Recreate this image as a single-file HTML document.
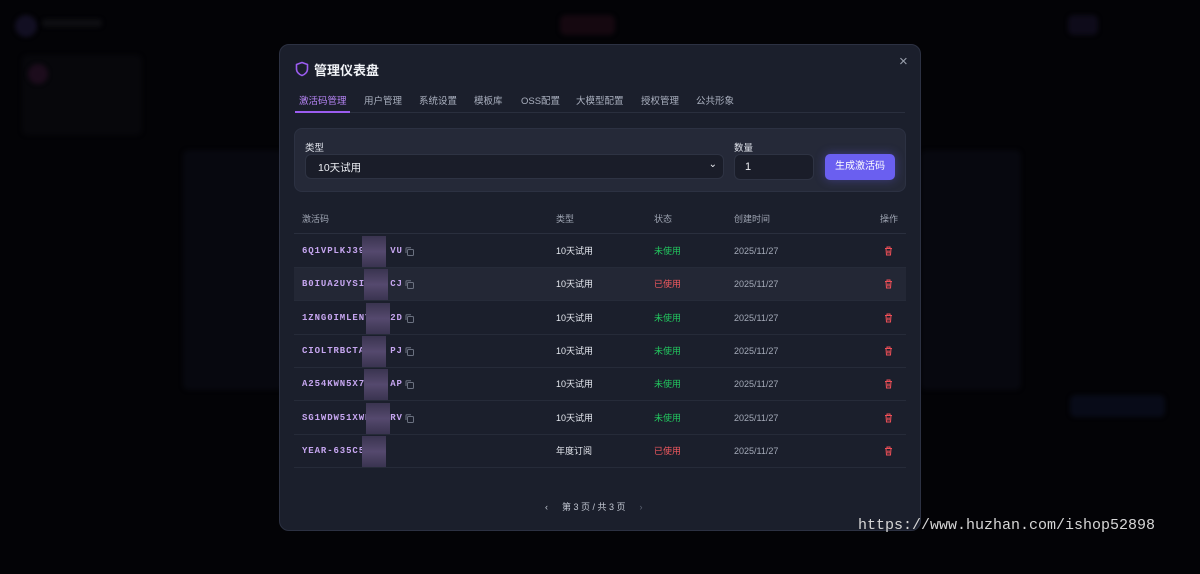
<!DOCTYPE html>
<html><head><meta charset="utf-8"><style>
*{box-sizing:border-box;margin:0;padding:0}
body{width:1200px;height:574px;background:#030306;position:relative;overflow:hidden;font-family:"Liberation Sans","Noto Sans CJK SC",sans-serif;}
.b{position:absolute;border-radius:6px;filter:blur(2px)}
.modal{position:absolute;left:279px;top:44px;width:642px;height:487px;background:#1b1f2c;border:1px solid #2c3142;border-radius:10px}
.t{position:absolute;white-space:nowrap}
.tabs{position:absolute;left:15px;top:42px;width:610px;height:26px;border-bottom:1px solid #2a2f3e}
.tabs span{position:absolute;top:6px;font-size:9.5px;color:#aab0bf}
.panel{position:absolute;left:14px;top:83px;width:612px;height:64px;background:#252938;border-radius:8px;border:1px solid #2c3142}
.row{position:absolute;left:14px;width:612px;height:33px;border-bottom:1px solid #262b39;font-size:9px}
.row span{position:absolute;top:0;line-height:32px}
.code{left:8px;color:#c6a6f0;font-family:"Liberation Mono",monospace;letter-spacing:0.9px;font-weight:bold}
.ty{left:262px;color:#e4e7ee}
.g{left:360px;color:#22c55e}
.r{left:360px;color:#f0595f}
.d{left:440px;color:#a3a9b7}
.mosaic{position:absolute;top:1px;width:24px;height:31px;background:linear-gradient(#3a3450,#55496e 50%,#3a3450)}
</style></head><body>
<div class="b" style="left:15px;top:15px;width:22px;height:22px;background:#120f22;border-radius:50%"></div>
<div class="b" style="left:42px;top:19px;width:60px;height:8px;background:#0e0e12"></div>
<div class="b" style="left:22px;top:55px;width:120px;height:80px;background:#07070b"></div>
<div class="b" style="left:28px;top:64px;width:20px;height:20px;background:#1c0c1c;border-radius:50%"></div>
<div class="b" style="left:560px;top:15px;width:55px;height:20px;background:#150810"></div>
<div class="b" style="left:1068px;top:15px;width:30px;height:20px;background:#0e0b1a"></div>
<div class="b" style="left:183px;top:150px;width:100px;height:240px;background:#07080f"></div>
<div class="b" style="left:921px;top:150px;width:100px;height:240px;background:#07080f"></div>
<div class="b" style="left:1070px;top:395px;width:95px;height:22px;background:#080b18"></div>

<div class="modal">
 <svg class="t" style="left:15px;top:16px" width="14" height="16" viewBox="0 0 14 16"><path d="M7 1.5 L12.5 3.5 V8 C12.5 11 10 13.5 7 14.5 C4 13.5 1.5 11 1.5 8 V3.5 Z" fill="none" stroke="#9b5cf0" stroke-width="1.6" stroke-linejoin="round"/></svg>
 <div class="t" style="left:34px;top:15px;font-size:13px;font-weight:bold;color:#f1f3f7">管理仪表盘</div>
 <div class="t" style="left:619px;top:8px;font-size:15px;color:#9aa0ad">×</div>
 <div class="tabs">
  <span style="left:4px;color:#b684f5">激活码管理</span>
  <span style="left:69px">用户管理</span><span style="left:124px">系统设置</span><span style="left:179px">模板库</span>
  <span style="left:226px">OSS配置</span><span style="left:281px">大模型配置</span><span style="left:346px">授权管理</span><span style="left:401px">公共形象</span>
  <div style="position:absolute;left:0;bottom:-1px;width:55px;height:2px;background:#9b5cf0"></div>
 </div>
 <div class="panel">
  <div class="t" style="left:10px;top:11px;font-size:9.5px;color:#dfe2ea">类型</div>
  <div class="t" style="left:10px;top:25px;width:419px;height:25px;background:#1a1d29;border:1px solid #2e3343;border-radius:6px;font-size:10.5px;color:#eceef3;padding:5px 12px">10天试用<span style="position:absolute;right:6px;top:4px;font-size:10px">⌄</span></div>
  <div class="t" style="left:439px;top:11px;font-size:9.5px;color:#dfe2ea">数量</div>
  <div class="t" style="left:439px;top:25px;width:80px;height:26px;background:#1a1d29;border:1px solid #2e3343;border-radius:6px;font-size:11px;color:#eceef3;padding:6px 10px">1</div>
  <div class="t" style="left:530px;top:25px;width:70px;height:26px;background:#6a5ff0;border-radius:5px;font-size:10px;color:#fff;text-align:center;line-height:26px;box-shadow:0 0 10px rgba(106,95,240,.4)">生成激活码</div>
 </div>
 <div class="row" style="top:159px;height:30px;border-bottom:1px solid #2a2f3e;font-size:9px;color:#9ea4b2">
  <span style="left:8px;line-height:30px">激活码</span><span style="left:262px;line-height:30px">类型</span><span style="left:360px;line-height:30px">状态</span><span style="left:440px;line-height:30px">创建时间</span><span style="left:586px;line-height:30px">操作</span>
 </div>
 <div id="rows"></div>
 <div class="t" style="left:265px;top:455px;font-size:9px;color:#c3c8d3"><span style="color:#c3c8d3;margin-right:14px">‹</span>第 3 页 / 共 3 页<span style="color:#5d6373;margin-left:14px">›</span></div>
</div>
<div class="t" style="left:858px;top:517px;font-family:'Liberation Mono',monospace;font-size:15px;color:#d6d6d6">https://www.huzhan.com/ishop52898</div>
<script>
var d=[["6Q1VPLKJ394","VU",1,"10天试用"],["B0IUA2UYSII","CJ",0,"10天试用"],["1ZNG0IMLENY","2D",1,"10天试用"],["CIOLTRBCTA8","PJ",1,"10天试用"],["A254KWN5X7H","AP",1,"10天试用"],["SG1WDW51XWN","RV",1,"10天试用"],["YEAR-635C5C","",0,"年度订阅"]];
var h="";d.forEach(function(r,i){var top=190+i*33.3;
h+='<div class="row" style="top:'+top+'px;'+(i==1?'background:#232735;':'')+'"><span class="code">'+r[0]+'<span style="position:static;color:transparent">xxx</span>'+r[1]+'</span>'
+'<div class="mosaic" style="left:'+(68+i%3*2)+'px"></div>'
+(r[1]?'<svg style="position:absolute;left:111px;top:12px" width="9" height="9" viewBox="0 0 9 9"><rect x="2.5" y="2.5" width="6" height="6" rx="1" fill="none" stroke="#6b7180"/><path d="M1 6V1.5C1 1 1.3.7 1.8.7H6" fill="none" stroke="#6b7180"/></svg>':'')
+'<span class="ty">'+r[3]+'</span><span class="'+(r[2]?'g':'r')+'">'+(r[2]?'未使用':'已使用')+'</span><span class="d">2025/11/27</span>'
+'<svg style="position:absolute;left:590px;top:11px" width="9" height="10" viewBox="0 0 9 10"><path d="M1 2.5H8M3 2.5V1H6V2.5M2 2.5L2.5 9H6.5L7 2.5M3.8 4.5V7.5M5.2 4.5V7.5" fill="none" stroke="#ef4f57" stroke-width="1"/></svg></div>';});
document.getElementById("rows").innerHTML=h;
</script>
</body></html>
